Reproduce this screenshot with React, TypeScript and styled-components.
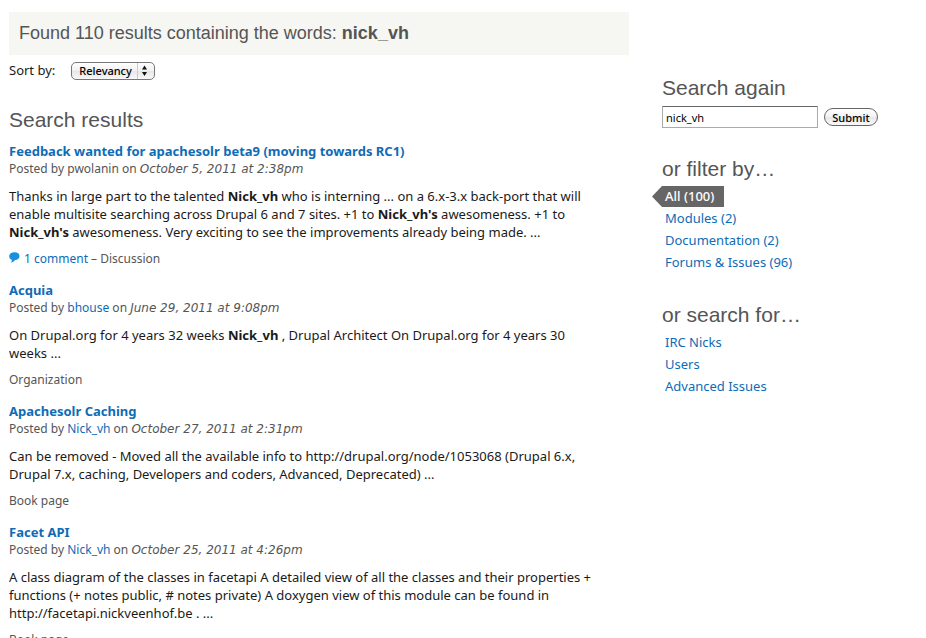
import React from "react";
import styled, { createGlobalStyle } from "styled-components";

const bodyFont = '"Noto Sans", "Open Sans", sans-serif';
const obliqueFont = '"DejaVu Sans", "Noto Sans", sans-serif';
const headingFont = '"Liberation Sans", Arial, sans-serif';

const GlobalStyle = createGlobalStyle`
  *, *::before, *::after { box-sizing: border-box; }
  html { scrollbar-width: none; }
  body {
    margin: 0;
    background: #fff;
    color: #1a1a1a;
    font: 13px/18px ${bodyFont};
  }
`;

const Page = styled.div`
  display: grid;
  grid-template-columns: minmax(0, 620fr) minmax(0, 264fr);
  column-gap: 33px;
  padding: 12px 0 12px 9px;
`;

const Banner = styled.h1`
  margin: 0;
  padding: 10px;
  background: #f6f6f2;
  color: #555;
  font: 18px/23px ${headingFont};
`;

const SortRow = styled.form`
  display: flex;
  align-items: flex-start;
  gap: 16px;
  padding-top: 7px;
  line-height: 16px;
`;

const SelectShell = styled.span`
  position: relative;
  display: flex;
`;

const Select = styled.select`
  appearance: none;
  height: 18px;
  width: 84px;
  margin: 0;
  padding: 0 20px 0 7px;
  border: 1px solid #777;
  border-radius: 5px;
  background: linear-gradient(#fff, #f0f0f0 50%, #e6e6e6 50%, #f8f8f8);
  color: #000;
  font: 500 11px/16px ${bodyFont};
`;

const Arrows = styled.svg`
  position: absolute;
  right: 1px;
  top: 1px;
  pointer-events: none;
`;

const Heading = styled.h2<{ $top: number; $bottom: number }>`
  margin: 0;
  padding: ${(p) => p.$top}px 0 ${(p) => p.$bottom}px;
  color: #555;
  font: 21px/26px ${headingFont};
`;

const Link = styled.a`
  color: #0e6cb6;
  text-decoration: none;
  &:hover { text-decoration: underline; }
`;

const ResultList = styled.div`
  display: flex;
  flex-direction: column;
  gap: 13px;
`;

const Title = styled.h3`
  margin: 0;
  font: 700 13px/18px ${bodyFont};
`;

const Byline = styled.p`
  margin: 0;
  color: #555;
  font-size: 12px;
  line-height: 17px;
`;

const PostDate = styled.em`
  font-family: ${obliqueFont};
  line-height: 1;
`;

const Snippet = styled.p`
  margin: 0;
  padding: 10px 28px 9px 0;
`;

const Kind = styled.p`
  margin: 0;
  color: #555;
  font-size: 12px;
  line-height: 18px;
`;

const Bubble = styled.svg`
  margin-right: 4px;
`;

const Sidebar = styled.aside`
  padding-top: 63px;
`;

const SearchForm = styled.form`
  display: flex;
  align-items: center;
  gap: 6px;
`;

const TextInput = styled.input`
  width: 156px;
  height: 22px;
  margin: 0;
  padding: 1px 3px;
  border: 1px solid #aaa;
  border-top-color: #666;
  border-radius: 0;
  background: #fff;
  color: #000;
  font: 11px/16px ${bodyFont};
`;

const Submit = styled.button`
  height: 18px;
  width: 54px;
  margin: 0;
  padding: 0;
  border: 1px solid #666;
  border-radius: 9px;
  background: linear-gradient(#fff, #f2f2f2 50%, #e6e6e6 50%, #fafafa);
  color: #000;
  font: 500 11px/15px ${bodyFont};
`;

const Filters = styled.ul`
  list-style: none;
  margin: 0;
  padding: 0;
  line-height: 22px;
`;

const FilterItem = styled.li`
  padding-left: 3px;
`;

const ActiveItem = styled.li`
  display: flex;
  margin-left: -10px;
`;

const ActiveLink = styled.a`
  padding: 0 10px 0 13px;
  line-height: 21px;
  background: #666;
  clip-path: polygon(0 50%, 10px 0, 100% 0, 100% 100%, 10px 100%);
  color: #fff;
  font-weight: 500;
  text-decoration: none;
`;

type Result = {
  title: string;
  author: string;
  authorLinked: boolean;
  date: string;
  snippet: React.ReactNode;
  comments?: string;
  kind: string;
};

const results: Result[] = [
  {
    title: "Feedback wanted for apachesolr beta9 (moving towards RC1)",
    author: "pwolanin",
    authorLinked: false,
    date: "October 5, 2011 at 2:38pm",
    snippet: (
      <>
        Thanks in large part to the talented <strong>Nick_vh</strong> who is interning ... on a
        6.x-3.x back-port that will enable multisite searching across Drupal 6 and 7 sites. +1 to{" "}
        <strong>Nick_vh's</strong> awesomeness. +1 to <strong>Nick_vh's</strong> awesomeness. Very
        exciting to see the improvements already being made. ...
      </>
    ),
    comments: "1 comment",
    kind: "Discussion",
  },
  {
    title: "Acquia",
    author: "bhouse",
    authorLinked: true,
    date: "June 29, 2011 at 9:08pm",
    snippet: (
      <>
        On Drupal.org for 4 years 32 weeks <strong>Nick_vh</strong> , Drupal Architect On Drupal.org
        for 4 years 30 weeks ...
      </>
    ),
    kind: "Organization",
  },
  {
    title: "Apachesolr Caching",
    author: "Nick_vh",
    authorLinked: true,
    date: "October 27, 2011 at 2:31pm",
    snippet:
      "Can be removed - Moved all the available info to http://drupal.org/node/1053068 (Drupal 6.x, Drupal 7.x, caching, Developers and coders, Advanced, Deprecated) ...",
    kind: "Book page",
  },
  {
    title: "Facet API",
    author: "Nick_vh",
    authorLinked: true,
    date: "October 25, 2011 at 4:26pm",
    snippet:
      "A class diagram of the classes in facetapi A detailed view of all the classes and their properties + functions (+ notes public, # notes private) A doxygen view of this module can be found in http://facetapi.nickveenhof.be . ...",
    kind: "Book page",
  },
];

const filters = ["Modules (2)", "Documentation (2)", "Forums & Issues (96)"];
const searches = ["IRC Nicks", "Users", "Advanced Issues"];

function ResultItem({ result }: { result: Result }) {
  return (
    <article>
      <Title>
        <Link href="#">{result.title}</Link>
      </Title>
      <Byline>
        Posted by {result.authorLinked ? <Link href="#">{result.author}</Link> : result.author} on{" "}
        <PostDate>{result.date}</PostDate>
      </Byline>
      <Snippet>{result.snippet}</Snippet>
      <Kind>
        {result.comments && (
          <>
            <Bubble width="11" height="11" viewBox="0 0 11 11" aria-hidden="true">
              <path
                d="M5.5 .2C8.5 .2 10.5 1.600 10.500 4C10.500 6.500 8.600 8 6 8C5 9.300 3.800 10.300 2 10.700C2.700 9.700 2.900 8.700 2.700 7.700C1.200 7.100 .2 5.900 .2 4.200C.2 1.800 2.500 .2 5.500 .2Z"
                fill="#1a8fdc"
              />
            </Bubble>
            <Link href="#">{result.comments}</Link> –{" "}
          </>
        )}
        {result.kind}
      </Kind>
    </article>
  );
}

export default function App() {
  return (
    <>
      <GlobalStyle />
      <Page>
        <main>
          <Banner>
            Found 110 results containing the words: <strong>nick_vh</strong>
          </Banner>
          <SortRow>
            <label htmlFor="sort">Sort by:</label>
            <SelectShell>
              <Select id="sort" defaultValue="Relevancy">
                <option>Relevancy</option>
              </Select>
              <Arrows width="17" height="16" viewBox="0 0 17 16" aria-hidden="true">
                <path d="M.5 0V16" stroke="#ccc" />
                <path d="M5 6.500L7.500 2.500 10 6.500ZM5 9L7.500 13 10 9Z" fill="#111" />
              </Arrows>
            </SelectShell>
          </SortRow>
          <Heading $top={27} $bottom={9}>
            Search results
          </Heading>
          <ResultList>
            {results.map((r) => (
              <ResultItem key={r.title} result={r} />
            ))}
          </ResultList>
        </main>
        <Sidebar>
          <Heading $top={0} $bottom={5}>
            Search again
          </Heading>
          <SearchForm>
            <TextInput type="text" aria-label="Search again" defaultValue="nick_vh" />
            <Submit type="button">Submit</Submit>
          </SearchForm>
          <Heading $top={28} $bottom={4}>
            or filter by…
          </Heading>
          <Filters>
            <ActiveItem>
              <ActiveLink href="#" aria-current="true">
                All (100)
              </ActiveLink>
            </ActiveItem>
            {filters.map((f) => (
              <FilterItem key={f}>
                <Link href="#">{f}</Link>
              </FilterItem>
            ))}
          </Filters>
          <Heading $top={29} $bottom={3}>
            or search for…
          </Heading>
          <Filters>
            {searches.map((s) => (
              <FilterItem key={s}>
                <Link href="#">{s}</Link>
              </FilterItem>
            ))}
          </Filters>
        </Sidebar>
      </Page>
    </>
  );
}
